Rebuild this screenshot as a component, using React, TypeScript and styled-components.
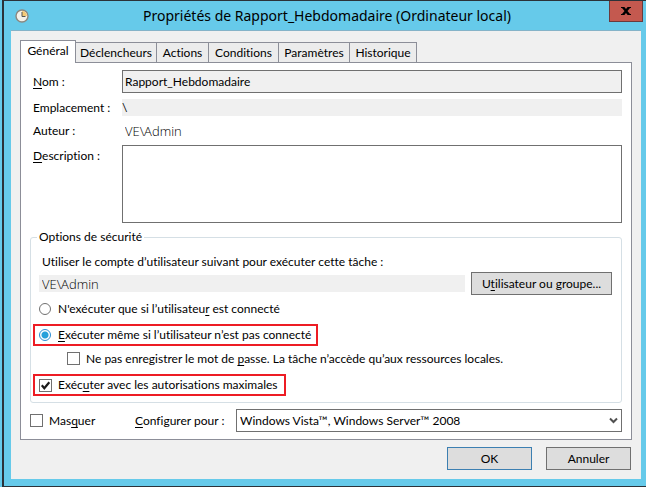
import React from 'react';
import styled, { createGlobalStyle, css } from 'styled-components';

const GlobalStyle = createGlobalStyle`
  * { box-sizing: border-box; }
  body {
    margin: 0;
    background: #66caea;
    color: #000;
    font: 12px/16px Lato, 'Open Sans', sans-serif;
    font-variant-ligatures: none;
  }
  input, textarea, select, button { font: inherit; color: inherit; border-radius: 0; margin: 0; }
  u { text-decoration-skip-ink: none; text-underline-offset: 2px; text-decoration-thickness: 1px; }
`;

const Desktop = styled.div`
  padding-left: 2px;
`;

const Window = styled.main`
  padding: 0 5px 7px 7px;
  background: #66caea;
  border: solid #2b3239;
  border-width: 1px 0 1px 2px;
`;

const TitleBar = styled.header`
  display: grid;
  grid-template-columns: 34px 1fr 34px;
  align-items: start;
  height: 29px;
  margin-right: -2px;
`;

const TitleIcon = styled.svg`
  width: 14px;
  height: 14px;
  margin: 8px 0 0 4px;
`;

const Title = styled.h1`
  margin: 0;
  font: 400 14px/30px 'Noto Sans', 'Open Sans', sans-serif;
  text-align: center;
  white-space: nowrap;
`;

const CloseButton = styled.button`
  display: grid;
  place-items: center;
  height: 21px;
  padding: 0;
  background: #c4594f;
  border: 1px solid #6b3a3c;
  border-top: 0;
`;

const Body = styled.form`
  padding: 9px 9px;
  background: #f0f0f0;
  border-top: 1px solid #85b3c8;
`;

const TabList = styled.div`
  display: flex;
  align-items: flex-end;
  height: 22px;
`;

const Tab = styled.button<{ $active?: boolean; $width: number }>`
  width: ${(p) => p.$width}px;
  height: 20px;
  padding: 0;
  text-align: center;
  white-space: nowrap;
  background: #ececec;
  border: 1px solid #8c8e98;
  border-left-width: 0;
  border-bottom: 0;
  ${(p) =>
    p.$active &&
    css`
      height: 23px;
      padding-bottom: 3px;
      margin-bottom: -1px;
      background: #fff;
      border-left-width: 1px;
      z-index: 1;
    `}
`;

const Panel = styled.section`
  padding: 7px 9px;
  background: #fff;
  border: 1px solid #8c8e98;
`;

const Fields = styled.div`
  display: grid;
  grid-template-columns: 86px 1fr;
  gap: 6px 3px;
  padding-left: 3px;
  align-items: center;
`;

const Label = styled.label<{ $top?: boolean }>`
  white-space: nowrap;
  ${(p) => p.$top && 'align-self: start; padding-top: 3px;'}
`;

const TextInput = styled.input`
  width: 100%;
  height: 23px;
  padding: 0 2px;
  background: #f0f0f0;
  border: 1px solid #707070;
`;

const PlainInput = styled.input<{ $band?: boolean; $light?: boolean }>`
  width: 100%;
  min-width: 0;
  height: 17px;
  padding: 0 ${(p) => (p.$light ? 3 : 0)}px;
  background: ${(p) => (p.$band ? '#f0f0f0' : 'transparent')};
  border: 0;
  ${(p) => p.$light && "font: 300 13px/16px 'Open Sans', sans-serif;"}
`;

const TextArea = styled.textarea`
  display: block;
  width: 100%;
  height: 78px;
  background: #fff;
  border: 1px solid #707070;
  resize: none;
`;

const Group = styled.fieldset`
  min-width: 0;
  margin: 6px 0;
  padding: 9px 9px 6px 2px;
  border: 1px solid #d5dfe5;
  border-radius: 3px;
`;

const Legend = styled.legend`
  height: 16px;
  margin-left: 4px;
  padding: 0 2px;
`;

const GroupText = styled.label`
  display: block;
  padding-left: 9px;
`;

const AccountRow = styled.div`
  display: flex;
  align-items: center;
  gap: 6px;
  margin: 2px 0 5px;
  padding-left: 6px;
`;

const Button = styled.button<{ $width: number; $primary?: boolean }>`
  flex: none;
  width: ${(p) => p.$width}px;
  height: 23px;
  padding: 0;
  white-space: nowrap;
  background: #dddddd;
  border: 1px solid ${(p) => (p.$primary ? '#3c7fb1' : '#707070')};
`;

const Options = styled.div`
  display: flex;
  flex-direction: column;
  align-items: flex-start;
`;

const Option = styled.label<{ $indent?: boolean }>`
  display: flex;
  align-items: center;
  gap: 6px;
  height: 17px;
  padding-left: ${(p) => (p.$indent ? 34 : 6)}px;
  white-space: nowrap;
`;

const Highlight = styled.div<{ $width: number }>`
  display: flex;
  align-items: center;
  width: ${(p) => p.$width}px;
  height: 22px;
  margin-top: 7px;
  border: 2px solid #ed1c24;
`;

const HighlightedOption = styled(Option)`
  padding-left: 4px;
`;

const Spaced = styled.div`
  margin-top: 4px;
`;

const Radio = styled.input`
  appearance: none;
  flex: none;
  width: 12px;
  height: 12px;
  margin-right: 1px;
  background: #fff;
  border: 1px solid #707070;
  border-radius: 50%;
  &:checked {
    border-color: #2a8dd4;
    background: radial-gradient(circle, #26a0da 3px, #fff 4px);
  }
`;

const Check = styled.input`
  appearance: none;
  flex: none;
  width: 13px;
  height: 13px;
  background: #fff;
  border: 1px solid #707070;
`;

const CheckBox = styled.span`
  display: grid;
  flex: none;
  width: 13px;
  height: 13px;
  > * { grid-area: 1 / 1; }
`;

const Footer = styled.div`
  display: grid;
  grid-template-columns: 102px 98px 1fr;
  gap: 3px;
  align-items: center;
`;

const FooterOption = styled(Option)`
  padding-left: 0;
`;

const SelectWrap = styled.div`
  display: grid;
  align-items: center;
  > * { grid-area: 1 / 1; }
`;

const Select = styled.select`
  appearance: none;
  width: 100%;
  height: 23px;
  padding: 0 20px 0 3px;
  background: #fff;
  border: 1px solid #707070;
`;

const Chevron = styled.svg`
  width: 9px;
  height: 7px;
  margin-right: 4px;
  justify-self: end;
  pointer-events: none;
`;

const Actions = styled.div`
  display: flex;
  justify-content: flex-end;
  gap: 14px;
  margin-top: 7px;
  padding-right: 1px;
`;

const tabs = [
  { name: 'Général', width: 56 },
  { name: 'Déclencheurs', width: 81 },
  { name: 'Actions', width: 52 },
  { name: 'Conditions', width: 70 },
  { name: 'Paramètres', width: 71 },
  { name: 'Historique', width: 67 },
];

const TickMark = () => (
  <svg width="13" height="13" viewBox="0 0 13 13" pointerEvents="none" aria-hidden="true">
    <path d="M2.8 6.3 5.3 9.2 10.3 3.2" fill="none" stroke="#1b1b1b" strokeWidth="2.2" />
  </svg>
);

export default function App() {
  return (
    <Desktop>
      <GlobalStyle />
      <Window>
        <TitleBar>
          <TitleIcon viewBox="0 0 14 14" aria-hidden="true">
            <circle cx="7" cy="7" r="6" fill="#f3f1ea" stroke="#8b8880" strokeWidth="1.4" />
            <path d="M7 7V2a5 5 0 0 1 5 5Z" fill="#f4ca77" />
            <path d="M7 3v4.5h3.5" fill="none" stroke="#555" />
          </TitleIcon>
          <Title>Propriétés de Rapport_Hebdomadaire (Ordinateur local)</Title>
          <CloseButton type="button" aria-label="Fermer">
            <svg width="10" height="8" viewBox="0 0 10 8" aria-hidden="true">
              <path d="M0 0h3.4L5 2 6.6 0H10v1H9L6.5 4 9 7h1v1H6.6L5 6 3.4 8H0V7h1l2.5-3L1 1H0Z" fill="#000" />
            </svg>
          </CloseButton>
        </TitleBar>
        <Body onSubmit={(e) => e.preventDefault()}>
          <TabList role="tablist">
            {tabs.map((t, i) => (
              <Tab key={t.name} type="button" role="tab" aria-selected={i === 0} $active={i === 0} $width={t.width}>
                {t.name}
              </Tab>
            ))}
          </TabList>
          <Panel role="tabpanel">
            <Fields>
              <Label htmlFor="name"><u>N</u>om :</Label>
              <TextInput id="name" readOnly defaultValue="Rapport_Hebdomadaire" />
              <Label htmlFor="location">Emplacement :</Label>
              <PlainInput id="location" readOnly $band defaultValue="\" />
              <Label htmlFor="author">Auteur :</Label>
              <PlainInput id="author" readOnly $light defaultValue="VE\Admin" />
              <Label htmlFor="description" $top><u>D</u>escription :</Label>
              <TextArea id="description" />
            </Fields>
            <Group>
              <Legend>Options de sécurité</Legend>
              <GroupText htmlFor="account">Utiliser le compte d’utilisateur suivant pour exécuter cette tâche :</GroupText>
              <AccountRow>
                <PlainInput id="account" readOnly $band $light defaultValue="VE\Admin" />
                <Button type="button" $width={141}><span>U<u>t</u>ilisateur ou groupe...</span></Button>
              </AccountRow>
              <Options>
                <Option>
                  <Radio type="radio" name="session" />
                  <span>N'exécuter que si l’utilisateu<u>r</u> est connecté</span>
                </Option>
                <Highlight $width={285}>
                  <HighlightedOption>
                    <Radio type="radio" name="session" defaultChecked />
                    <span><u>E</u>xécuter même si l’utilisateur n’est pas connecté</span>
                  </HighlightedOption>
                </Highlight>
                <Spaced>
                  <Option $indent>
                    <Check type="checkbox" />
                    <span>Ne pas enregistrer le mot de <u>p</u>asse. La tâche n’accède qu’aux ressources locales.</span>
                  </Option>
                </Spaced>
                <Highlight $width={253}>
                  <HighlightedOption>
                    <CheckBox>
                      <Check type="checkbox" defaultChecked />
                      <TickMark />
                    </CheckBox>
                    <span>Exéc<u>u</u>ter avec les autorisations maximales</span>
                  </HighlightedOption>
                </Highlight>
              </Options>
            </Group>
            <Footer>
              <FooterOption>
                <Check type="checkbox" />
                <span>Mas<u>q</u>uer</span>
              </FooterOption>
              <Label htmlFor="target"><u>C</u>onfigurer pour :</Label>
              <SelectWrap>
                <Select id="target">
                  <option>Windows Vista™, Windows Server™ 2008</option>
                </Select>
                <Chevron viewBox="0 0 9 7" aria-hidden="true">
                  <path d="M1 1.5 4.5 5 8 1.5" fill="none" stroke="#505050" strokeWidth="2" />
                </Chevron>
              </SelectWrap>
            </Footer>
          </Panel>
          <Actions>
            <Button type="submit" $width={85} $primary>OK</Button>
            <Button type="button" $width={85}>Annuler</Button>
          </Actions>
        </Body>
      </Window>
    </Desktop>
  );
}
